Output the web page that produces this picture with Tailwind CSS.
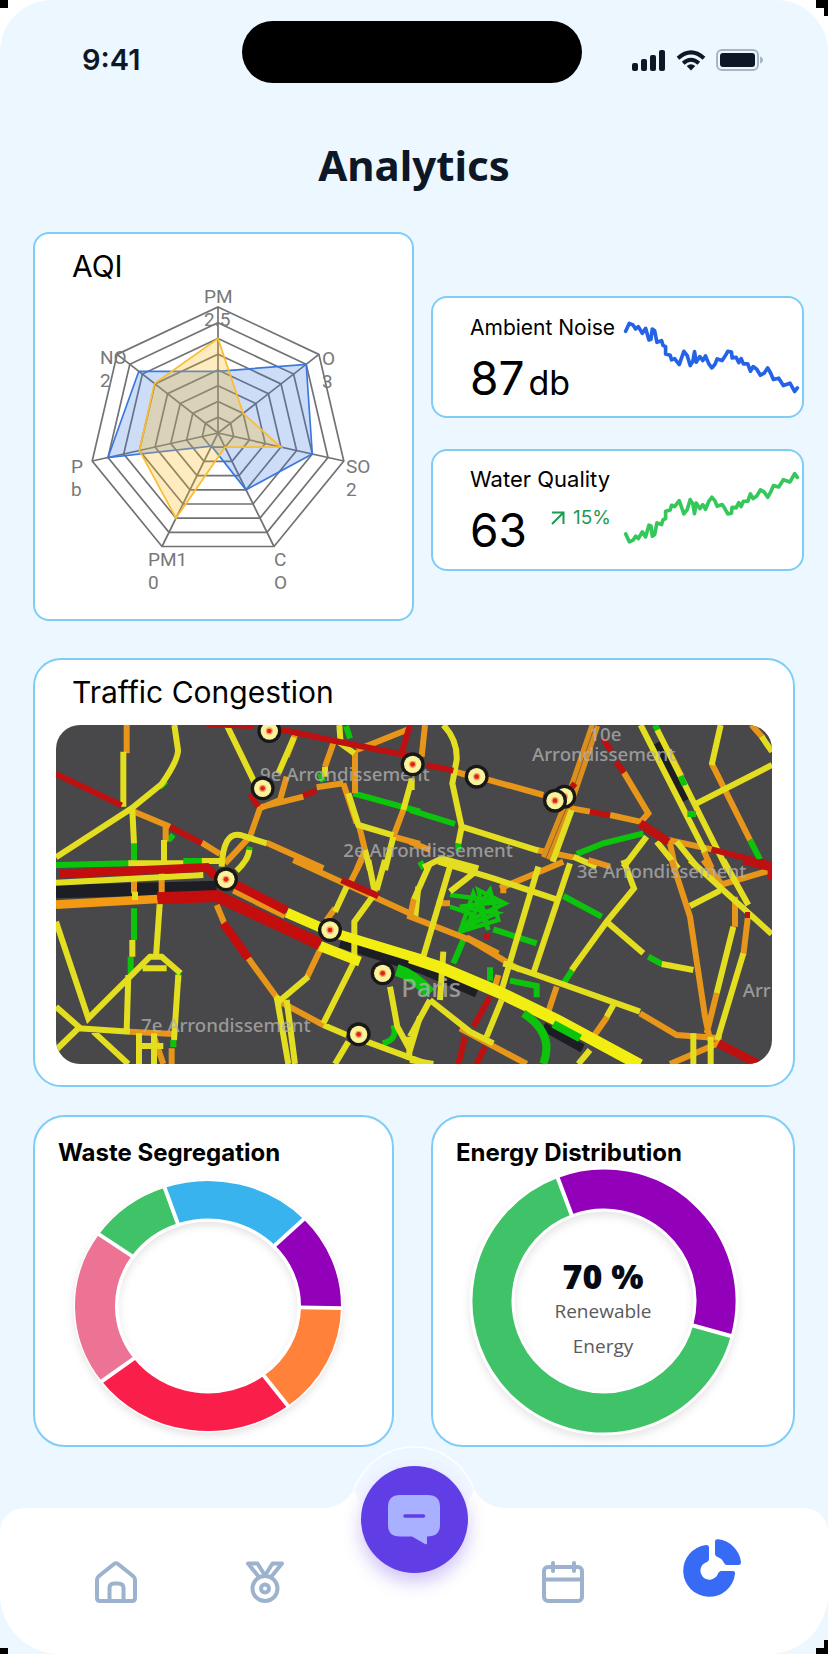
<!DOCTYPE html>
<html lang="en">
<head>
<meta charset="utf-8">
<meta name="viewport" content="width=device-width, initial-scale=1">
<title>Analytics</title>
<script src="https://cdn.jsdelivr.net/npm/@tailwindcss/browser@4"></script>
</head>
<body class="bg-white font-['Inter',sans-serif] text-black">
<div class="relative flex min-h-screen flex-col overflow-hidden bg-white">
  <!-- bezel corners -->
  <span class="absolute top-0 left-0 size-2 bg-black"></span>
  <span class="absolute top-0 right-0 h-2 w-3 bg-black"></span>
  <span class="absolute top-0 right-0 h-4 w-1 bg-black"></span>

  <div class="relative flex flex-1 flex-col rounded-t-[52px] bg-[#ecf7ff]">
    <header>
      <div class="grid grid-cols-[242fr_340px_246fr] items-center pt-[21px] text-[#0e1726]">
        <time class="pt-4 pl-[82px] text-[29px] leading-9 font-semibold">9:41</time>
        <div class="h-[62px] rounded-full bg-black"></div>
        <div class="flex items-center justify-end gap-2.5 pt-4 pr-[65px]">
          <svg class="h-[21px] w-[34px]" viewBox="0 0 34 21" fill="currentColor" aria-label="Signal"><rect x="0" y="13" width="6" height="8" rx="2"/><rect x="9" y="9" width="6" height="12" rx="2"/><rect x="18" y="5" width="6" height="16" rx="2"/><rect x="27" y="0" width="6" height="21" rx="2"/></svg>
          <svg class="h-[21px] w-[30px]" viewBox="0 0 30 21" fill="none" stroke="currentColor" stroke-width="4" aria-label="Wi-Fi"><path d="M2 8.200Q15-3.500 28 8.200M7.200 13.200Q15 6.300 22.800 13.200"/><path d="M15 20.500l-4.300-4.600q4.300-3.200 8.600 0z" fill="currentColor" stroke="none"/></svg>
          <svg class="h-[22px] w-[47px]" viewBox="0 0 47 22" aria-label="Battery"><rect x="1" y="1" width="41" height="20" rx="5" fill="none" stroke="#a9b4c4" stroke-width="2"/><rect x="4" y="4" width="35" height="14" rx="3" fill="currentColor"/><path d="M44 7.500q3 1 3 3.500t-3 3.500z" fill="#a9b4c4"/></svg>
        </div>
      </div>
      <h1 class="pt-[50px] text-center font-['Noto_Sans',sans-serif] text-[42px] leading-[64px] font-bold text-[#0e1726]">Analytics</h1>
    </header>

    <main class="flex flex-col">
      <section class="grid grid-cols-[381fr_373fr] items-start gap-[17px] pt-[35px] pr-6 pl-[33px]">
        <article class="rounded-2xl border-2 border-[#7fcdf7] bg-white pt-[14px]">
          <h2 class="px-[37px] text-[30px] leading-9">AQI</h2>
          <svg class="block w-full" viewBox="0 0 377 335" role="img" aria-label="Air quality radar chart" fill="none">
            <g id="radar-grid" class="stroke-[#717274]" stroke-width="1.700"></g>
            <g id="radar-data" stroke-width="1.700"></g>
            <g class="fill-[#77787a] font-['Roboto',sans-serif] text-[19px]">
              <text x="169" y="19">PM</text><text x="169" y="42">2.5</text>
              <text x="287" y="81">O</text><text x="287" y="104">3</text>
              <text x="311" y="189">SO</text><text x="311" y="212">2</text>
              <text x="239" y="282">C</text><text x="239" y="305">O</text>
              <text x="113" y="282">PM1</text><text x="113" y="305">0</text>
              <text x="36" y="189">P</text><text x="36" y="212">b</text>
              <text x="65" y="80">NO</text><text x="65" y="103">2</text>
            </g>
          </svg>
        </article>
        <div class="flex flex-col gap-[31px] pt-16">
          <article class="flex h-[122px] items-start rounded-2xl border-2 border-[#7fcdf7] bg-white pr-1 pl-[37px]">
            <div class="shrink-0 pt-4">
              <h2 class="text-[21px] leading-7">Ambient Noise</h2>
              <p class="flex items-baseline gap-1 text-[46px] leading-[72px]">87<span class="text-[34px]">db</span></p>
            </div>
            <svg class="mt-[22px] ml-auto w-[175px] overflow-visible" viewBox="610 118 526 226" fill="none" stroke="#2563e6" stroke-width="11" stroke-linejoin="round" stroke-linecap="round" role="img" aria-label="Noise trend">
              <path id="trend" d="M618 152L629 128 640 133 648 145 656 138 668 158 678 143 688 178 694 176 698 145 705 150 712 185 726 180 730 194 738 198 738 220 752 224 756 238 765 234 779 252 786 232 793 212 803 225 812 255 820 242 825 213 830 245 841 228 850 240 858 226 868 250 877 262 886 252 893 235 908 240 916 228 925 212 936 214 938 232 950 230 958 246 965 234 972 250 985 250 993 272 1001 258 1012 266 1023 284 1034 278 1045 262 1054 278 1062 297 1078 293 1092 315 1112 308 1126 333 1134 322"/>
            </svg>
          </article>
          <article class="flex h-[122px] items-start rounded-2xl border-2 border-[#7fcdf7] bg-white pr-1 pl-[37px]">
            <div class="shrink-0 pt-[14px]">
              <h2 class="text-[22px] leading-7">Water Quality</h2>
              <p class="flex items-center text-[46px] leading-[74px]">63
                <span class="mb-6 ml-6 flex items-center gap-2 text-[19px] leading-6 text-[#1d9a50]">
                  <svg class="size-[14px]" viewBox="0 0 14 14" fill="none" stroke="currentColor" stroke-width="2"><path d="M1 13L12.500 1.500M1 1.500H12.500V13"/></svg>15%</span></p>
            </div>
            <svg class="mt-[19px] ml-auto w-[175px] overflow-visible" viewBox="610 571 526 226" fill="none" stroke="#34c759" stroke-width="11" stroke-linejoin="round" stroke-linecap="round" role="img" aria-label="Water quality trend">
              <use href="#trend" transform="translate(0 915) scale(1 -1)"/>
            </svg>
          </article>
        </div>
      </section>

      <section class="px-[33px] pt-[37px]">
        <article class="rounded-[28px] border-2 border-[#7fcdf7] bg-white px-[21px] pt-[14px] pb-[21px]">
          <h2 class="px-4 text-[30px] leading-9">Traffic Congestion</h2>
          <svg class="mt-[15px] block w-full rounded-3xl bg-[#48484a]" viewBox="0 0 2148 1017" fill="none" stroke-width="18" role="img" aria-label="Traffic map of Paris">
            <!-- river and unlit roads -->
            <g class="stroke-[#1d1d24]" stroke-width="40">
              <path d="M0 500L482 487"/>
              <path stroke-width="26" d="M852 655L1100 735 1262 805M1462 905L1580 970M1800 55L1892 225"/>
            </g>
            <!-- north-west -->
            <g transform="translate(-108 -225)">
              <path class="stroke-[#0cc40c]" d="M342 580V640M445 572l15-18M108 645L330 640M490 633H545M690 590L680 630M978 228L990 265M1000 430L1200 485M900 370l10 25M418 412l20-18"/>
              <path class="stroke-[#e8961a]" d="M320 225V310M330 480L450 530M545 578L600 612M437 532V575M800 380L780 450 720 475 690 560 615 640M720 472L850 440M890 412L970 400M740 578L910 655M940 280L915 350M1005 300V430M1010 300L1165 238M970 400L1010 520M1120 560L1200 582M1150 480L1120 560M1018 530L1035 600 1010 660M825 255L800 320"/>
              <path class="stroke-[#e3df20]" d="M310 305V470M463 225L474 300Q475 330 425 402L335 475 108 622M337 480L342 580M432 570V635M325 640H490M545 633H600M620 225L705 400M822 262L775 370M605 650Q610 545 660 555L740 580M650 662Q685 630 688 600M958 225L962 280 1003 310M915 350V380M985 430L1015 525 1120 556M1175 390L1150 480M1120 560L1095 660M1035 600L1050 660"/>
              <path class="stroke-[#bd1010]" d="M108 372L305 466M450 530L545 580M690 432L715 470M560 222L700 228M780 238L960 276 1180 320M850 437L890 422M1170 225L1145 310"/>
            </g>
            <!-- north-east -->
            <g transform="translate(1062 -225)">
              <path class="stroke-[#0cc40c]" d="M0 480L135 522M145 575V602M500 612L580 580 700 550M735 225l10 20M30 635l12 20"/>
              <path class="stroke-[#e8961a]" d="M45 225L35 320M125 362L170 375M230 388L400 435M485 475L540 485M600 495L690 515M775 570L905 598M380 600L490 622M640 365L715 490 690 518M905 340L1020 570M1025 225L1060 265M0 575L60 600M780 580L795 650M880 600L905 655M775 300L815 380"/>
              <path class="stroke-[#dd8f1c]" stroke-width="32" d="M555 225L478 452 408 625"/>
              <path class="stroke-[#8a6430]" stroke-width="3" d="M555 225L478 452 408 625"/>
              <path class="stroke-[#e3df20]" d="M100 225Q143 270 140 330L127 400 155 530 145 580M155 530L385 602M485 480L428 635M692 225L885 605M742 240L855 465 950 655M932 225L905 345M860 460L1086 345M1055 260L1086 305M710 560L640 652M740 575L805 655M800 575L865 655M40 652L95 625 205 655M5 385V420M490 620L560 650"/>
              <path class="stroke-[#bd1010]" d="M50 345L130 362M540 485L600 496M580 268L602 302M618 335L642 368M905 598L1086 645M475 425L495 400"/>
              <path class="stroke-[#bd1010]" stroke-width="26" d="M690 520L775 576"/>
              <path class="stroke-[#0cc40c]" d="M812 378l12 28M832 492h26M1020 570L1050 628"/>
            </g>
            <!-- south-west -->
            <g transform="translate(-108 405)">
              <path class="stroke-[#0cc40c]" d="M342 145V240M332 290V345M475 342V366M460 540V562M1120 495Q1135 540 1088 550M368 325H390"/>
              <path class="stroke-[#0cc40c]" stroke-width="36" d="M1130 330Q1180 345 1230 400"/>
              <path class="stroke-[#f39a12]" stroke-width="26" d="M108 134L412 117"/>
              <path class="stroke-[#e8961a]" d="M342 55V100M425 55V115M640 92L795 168M590 135L615 195M685 295L780 425 910 495M330 515L460 522M455 565V612M402 530L430 612M905 260L862 350M820 0L1180 165M1025 0L985 80M945 145L920 180"/>
              <path class="stroke-[#e3df20]" d="M108 68L550 45M345 95V120M337 240V290M325 345L320 510M425 5V50M420 120L408 290M108 185L205 475 390 290H425L482 340M368 325H440M475 345L462 540M108 440L178 502 108 570M175 505L330 515M220 515L325 612M357 520V612M402 520V612M365 558H430M910 495L980 525M1040 545L1210 608M770 410L805 612M800 420L825 612M865 350L782 420 765 412M1000 310L910 490M980 80L945 155M1045 0L1065 100 1003 185V300M1095 0L1070 90M1195 80L1185 180M1110 380L1132 500 1170 570 1200 470M985 545L945 612M1168 530V600"/>
              <path class="stroke-[#f2ee12]" stroke-width="30" d="M800 158L930 215 1210 300M900 258L1020 305"/>
              <path class="stroke-[#c40d0d]" stroke-width="26" d="M118 42L560 22 605 65M630 65L800 152M610 190L685 295"/>
              <path class="stroke-[#c40d0d]" stroke-width="36" d="M412 115L590 108 900 252"/>
              <path class="stroke-[#bd1010]" stroke-width="20" d="M965 60L1075 108"/>
            </g>
            <!-- south-east -->
            <g transform="translate(1062 405)">
              <path class="stroke-[#0cc40c]" d="M460 108L575 170M715 290L755 312M490 325L462 368M250 208L380 250M160 240L130 310M240 322V362M300 362L380 378V412"/>
              <path class="stroke-[#0cc40c]" stroke-width="13" d="M120 105L275 125 150 140 260 160 165 200 240 90 265 180 150 215 190 100 235 210 205 90 285 130 180 180M120 140L180 160 190 200"/>
              <path class="stroke-[#e8961a]" d="M12 115L0 170 180 240 330 330M270 85L460 5M280 60V100M80 130H120M170 232L265 280M440 380L415 455M592 470L550 530M690 460L800 525 935 535M785 0L840 170 885 470 900 540M975 110V200M1015 160L1000 285M920 400L890 520M940 72L1085 30M780 612L935 545M150 505L350 612M880 0L940 80M265 345L255 380M535 0L600 20"/>
              <path class="stroke-[#e3df20]" d="M60 10L12 118M120 20L40 290M190 40L120 95M85 5L250 55 450 122M590 185L700 280M755 312L850 330M480 10L370 340M385 20L275 390M640 0L672 85 590 185 485 330M280 310L380 345 690 455M610 435L590 470M275 420L230 530M60 420L0 530M60 420L180 515 250 550M0 600L70 612M540 570L505 612M840 138L930 92M840 0L1085 222M940 0L1015 135M970 200L920 400M1000 280L922 540M850 520V612M902 530V612M100 275L90 420"/>
              <path class="stroke-[#f2ee12]" stroke-width="36" d="M0 292L90 322 270 398 440 480 690 615"/>
              <path class="stroke-[#0cc40c]" stroke-width="24" d="M340 460Q435 520 400 612M430 492L510 535"/>
              <path class="stroke-[#bd1010]" d="M240 410L190 500M165 530L145 612M225 560L200 612M1005 165H1020M222 230H240"/>
              <path class="stroke-[#bd1010]" stroke-width="26" d="M1000 0L1086 22V60M925 550L1045 612"/>
            </g>
            <g class="fill-[#b0b0b0]/80 font-['Noto_Sans',sans-serif] text-[56px] font-medium">
              <text x="612" y="167">9e Arrondissement</text>
              <text x="1600" y="48">10e</text>
              <text x="1428" y="108">Arrondissement</text>
              <text x="862" y="395">2e Arrondissement</text>
              <text x="1562" y="460">3e Arrondissement</text>
              <text x="255" y="920">7e Arrondissement</text>
              <text x="2060" y="815">Arr</text>
              <text class="text-[76px]" x="1036" y="815">Paris</text>
            </g>
            <defs>
              <g id="pin"><circle r="36" fill="#181818"/><circle r="26" fill="#fbf39b"/><circle r="11" fill="#f5a56a"/><circle r="7" fill="#dd2211"/></g>
            </defs>
            <use href="#pin" x="640" y="18"/><use href="#pin" x="620" y="190"/><use href="#pin" x="1070" y="118"/>
            <use href="#pin" x="1262" y="155"/><use href="#pin" x="1525" y="215"/><use href="#pin" x="1497" y="227"/>
            <use href="#pin" x="510" y="463"/><use href="#pin" x="822" y="615"/><use href="#pin" x="980" y="745"/><use href="#pin" x="908" y="928"/>
          </svg>
        </article>
      </section>

      <section class="grid grid-cols-[361fr_364fr] gap-[37px] px-[33px] pt-7">
        <article class="rounded-[32px] border-2 border-[#7fcdf7] bg-white">
          <h2 class="px-[23px] pt-[22px] text-[24px] leading-7 font-bold">Waste Segregation</h2>
          <svg class="block w-full" viewBox="0 0 357 278" fill="none" role="img" aria-label="Waste segregation donut chart">
            <g transform="translate(173 139) scale(1 .94)">
              <circle r="112" stroke="#fff" stroke-width="45" class="drop-shadow-[0_4px_4px_rgb(0_0_0/0.100)]"/>
              <g id="waste" stroke-width="40"></g>
            </g>
          </svg>
        </article>
        <article class="rounded-[32px] border-2 border-[#7fcdf7] bg-white">
          <h2 class="px-[23px] pt-[22px] text-[24px] leading-7 font-bold">Energy Distribution</h2>
          <svg class="block w-full overflow-visible" viewBox="0 0 360 278" fill="none" role="img" aria-label="Energy distribution donut chart">
            <g transform="translate(171 134)">
              <circle r="112" stroke="#fff" stroke-width="45" class="drop-shadow-[0_4px_4px_rgb(0_0_0/0.100)]"/>
              <g id="energy" stroke-width="39"></g>
            </g>
            <g text-anchor="middle" class="font-['Open_Sans',sans-serif]">
              <text x="170" y="122" class="fill-[#050a14] text-[34px] font-extrabold">70 %</text>
              <text x="170" y="151" class="fill-[#5a5a5c] text-[19px]">Renewable</text>
              <text x="170" y="186" class="fill-[#5a5a5c] text-[19px]">Energy</text>
            </g>
          </svg>
        </article>
      </section>
    </main>

    <nav class="relative mt-auto flex h-[146px] items-start rounded-t-3xl rounded-b-[60px] bg-white px-[41px] text-[#9cb2cd]" aria-label="Main">
      <!-- raised notch behind the chat button -->
      <svg class="absolute -top-[62px] left-1/2 w-[180px] -translate-x-1/2" viewBox="0 0 180 90">
        <defs><linearGradient id="notch" x1="0" y1="0" x2="0" y2="1"><stop offset="0" stop-color="#eaf6ff"/><stop offset=".5" stop-color="#f4f8ff"/><stop offset=".75" stop-color="#fff"/></linearGradient></defs>
        <path d="M0 62Q20 61 30 43C40 18 62 1 90 1S140 18 150 43Q160 61 180 62V90H0Z" fill="url(#notch)"/>
        <path d="M0 62.500Q20 61 30 43L38 62V90H0ZM180 62.500Q160 61 150 43L142 62V90H180Z" fill="#fff"/>
        <path d="M30 43C40 18 62 1 90 1S140 18 150 43" fill="none" stroke="#fff" stroke-width="1.500"/>
      </svg>
      <a href="#home" aria-label="Home" class="flex flex-1 justify-center pt-[52px]">
        <svg class="size-[44px]" viewBox="0 0 44 44" fill="none" stroke="currentColor" stroke-width="4" stroke-linejoin="round"><path d="M3 20Q3 17.500 5 16L20 4Q22 2.500 24 4L39 16Q41 17.500 41 20V38Q41 41 38 41H6Q3 41 3 38Z"/><path d="M15.500 41V28Q15.500 23.500 20 23.500H24Q29.500 23.500 29.500 28V41"/></svg>
      </a>
      <a href="#rewards" aria-label="Rewards" class="flex flex-1 justify-center pt-[52px]">
        <svg class="size-[44px]" viewBox="0 0 44 44" fill="none" stroke="currentColor" stroke-width="4" stroke-linejoin="round"><circle cx="22" cy="28.500" r="12.500"/><circle cx="22" cy="28.500" r="4"/><path d="M16 17L5 3.500H14.500L22 15.500 29.500 3.500H39L28 17"/></svg>
      </a>
      <div class="relative flex flex-1 justify-center">
        <button type="button" aria-label="Chat" class="-mt-[42px] flex size-[107px] shrink-0 items-center justify-center rounded-full bg-[#613de6] shadow-[0_9px_18px_rgb(97_61_230/0.300)]">
          <svg class="h-[50px] w-[52px]" viewBox="0 0 52 50"><path d="M12 0H40Q52 0 52 12V30Q52 41.500 39 41.500V48Q39 50 37 49L24 41.500H12Q0 41.500 0 30V12Q0 0 12 0Z" fill="#a9b0ff"/><path d="M17 21H35.500" stroke="#613de6" stroke-width="3.500" stroke-linecap="round"/></svg>
        </button>
      </div>
      <a href="#calendar" aria-label="Calendar" class="flex flex-1 justify-center pt-[52px]">
        <svg class="size-[44px]" viewBox="0 0 44 44" fill="none" stroke="currentColor" stroke-width="4" stroke-linecap="round"><rect x="3" y="7" width="38" height="34" rx="4"/><path d="M3 19.500H41M12 3V11M33 3V11"/></svg>
      </a>
      <a href="#analytics" aria-label="Analytics" aria-current="page" class="flex flex-1 justify-center pt-[31px]">
        <svg class="size-[58px]" viewBox="0 0 58 58" fill="#376bf5"><path d="M26 8.500V20Q26 22 24 23A9 9 0 1 0 35 34.500Q36 32 38 32H50Q52.500 32 52 35A26 26 0 1 1 23 6Q26 5.500 26 8.500Z"/><path d="M32 2.500Q32 0 35 .300A26 26 0 0 1 58 23Q58 26 55.500 26H44Q42 26 41 24A10 10 0 0 0 34.500 18Q32 17 32 15Z"/></svg>
      </a>
      <span class="absolute bottom-0 left-0 h-1.5 w-2 bg-black"></span>
      <span class="absolute right-0 bottom-0 h-1.5 w-3 bg-black"></span>
      <span class="absolute right-0 bottom-0 h-3.5 w-1 bg-black"></span>
    </nav>
  </div>
</div>
<script>
const NS = 'http://www.w3.org/2000/svg';
function add(parent, tag, attrs) {
  const el = document.createElementNS(NS, tag);
  for (const k in attrs) el.setAttribute(k, attrs[k]);
  parent.appendChild(el);
}

// Radar chart: seven axes, eight rings
const C = [183, 149], R = [129, 126];
const at = (i, v) => {
  const a = i * 2 * Math.PI / 7;
  return [C[0] + Math.sin(a) * R[0] * v, C[1] - Math.cos(a) * R[1] * v].map(n => n.toFixed(1)).join(',');
};
const poly = vals => vals.map((v, i) => at(i, v)).join(' ');
const grid = document.getElementById('radar-grid');
for (let r = 1; r <= 8; r++) add(grid, 'polygon', { points: poly(Array(7).fill(r / 8)) });
for (let i = 0; i < 7; i++) add(grid, 'polyline', { points: at(0, 0) + ' ' + at(i, 1) });
const series = document.getElementById('radar-data');
add(series, 'polygon', { points: poly([.49, .875, .75, .5, .115, .875, .785]), fill: '#3a78e0', 'fill-opacity': .25, stroke: '#3a78e0' });
add(series, 'polygon', { points: poly([.75, .25, .5, .125, .75, .625, .63]), fill: '#fbbc1e', 'fill-opacity': .28, stroke: '#fbbc2e' });

// Donut segments: [start, end, colour], degrees clockwise from east
function donut(id, r, w, segments) {
  const g = document.getElementById(id), rad = d => d * Math.PI / 180;
  const p = (d, q) => (Math.cos(rad(d)) * q).toFixed(2) + ' ' + (Math.sin(rad(d)) * q).toFixed(2);
  for (const [a, b, colour] of segments)
    add(g, 'path', { d: `M${p(a, r)}A${r} ${r} 0 ${b - a > 180 ? 1 : 0} 1 ${p(b, r)}`, stroke: colour });
  for (const [a] of segments)
    add(g, 'path', { d: `M${p(a, r - w / 2 - 2)}L${p(a, r + w / 2 + 2)}`, stroke: '#fff', 'stroke-width': 4 });
}
donut('waste', 113, 40, [[1, 53, '#ff813a'], [53, 143, '#fa1e4a'], [143, 215, '#ec7393'], [215, 251, '#3fc268'], [251, 316, '#39b3ee'], [316, 361, '#9200ba']]);
donut('energy', 112, 39, [[249.4, 375.4, '#9200ba'], [15.4, 249.4, '#3fc268']]);
</script>
</body>
</html>
